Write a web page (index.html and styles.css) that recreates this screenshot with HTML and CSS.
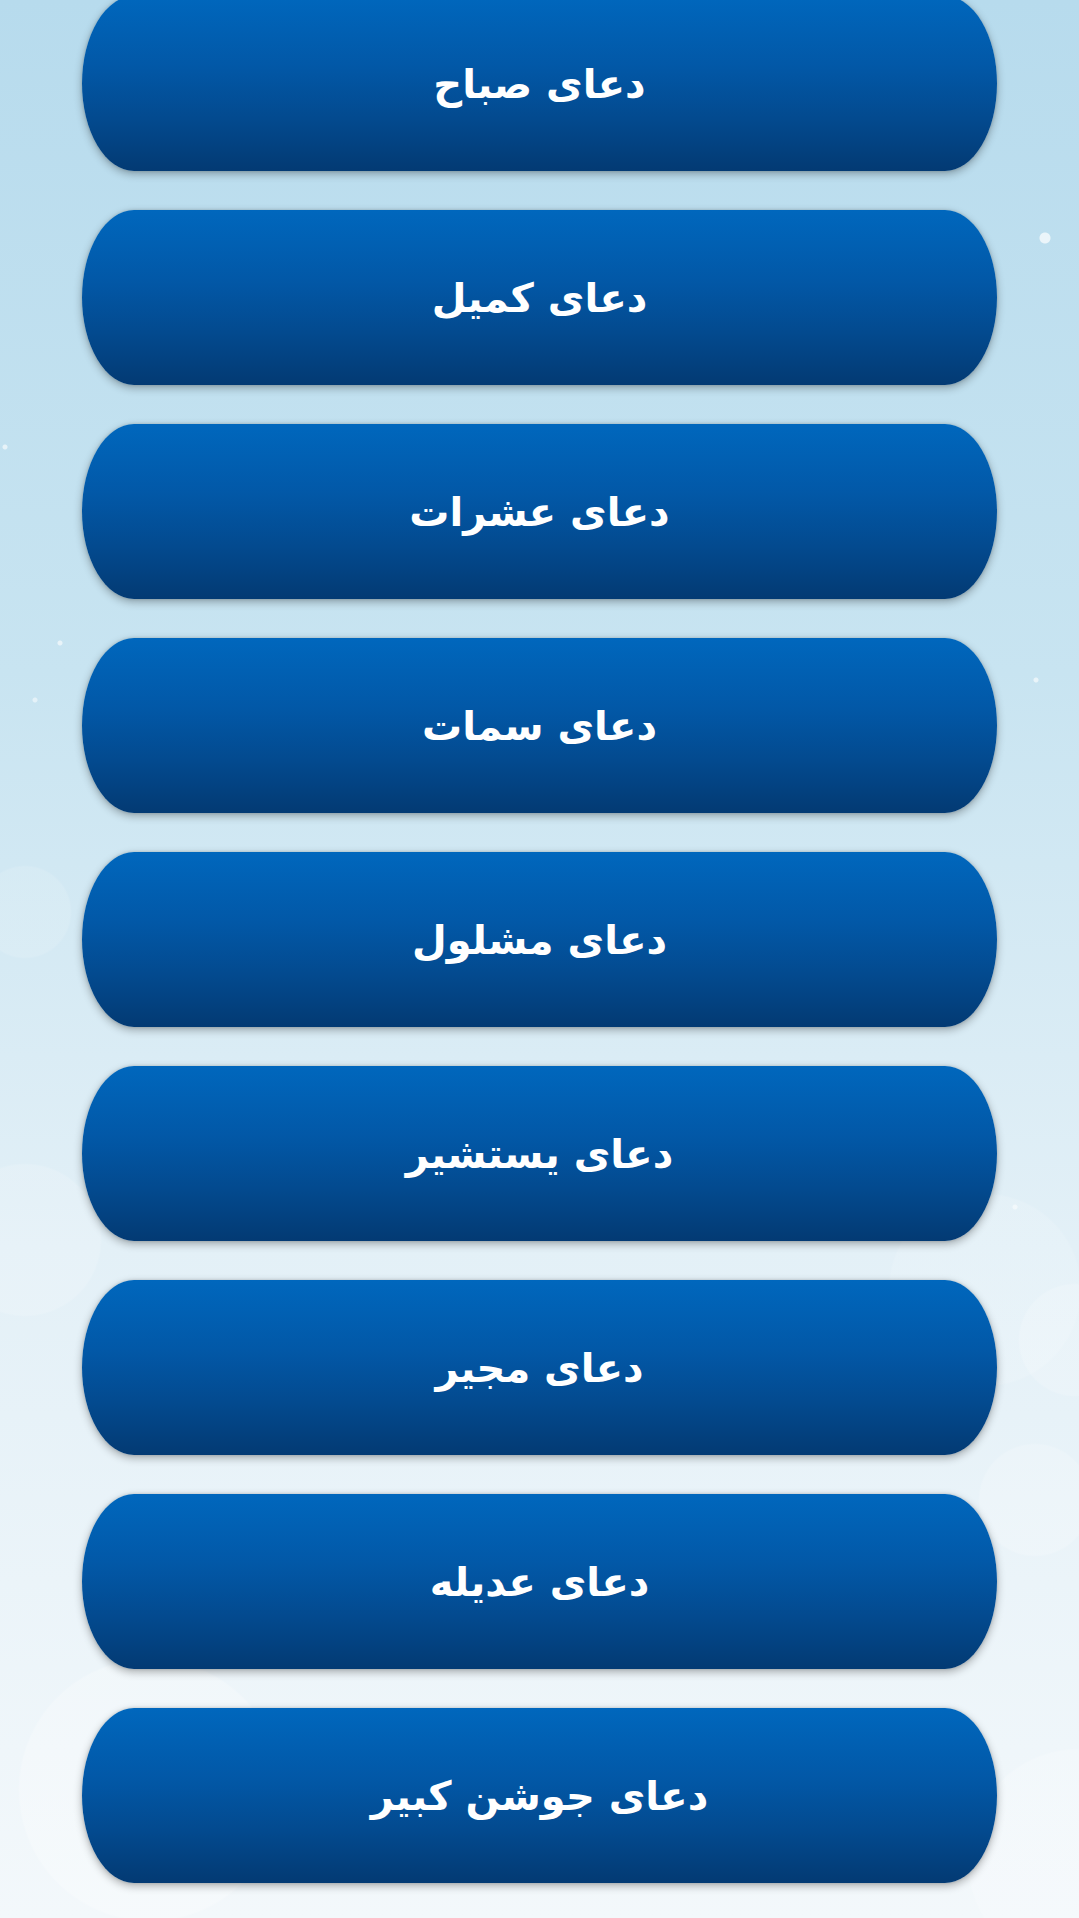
FILE: index.html
```html
<!DOCTYPE html>
<html lang="fa" dir="rtl">
<head>
    <meta charset="UTF-8">
    <meta name="viewport" content="width=device-width, initial-scale=1.0">
    <title>ادعیه</title>
    <link rel="stylesheet" href="styles.css">
</head>
<body>
    <!-- Prayer list -->
    <div class="dua-list">
        <button class="dua-button">دعای صباح</button>
        <button class="dua-button">دعای کمیل</button>
        <button class="dua-button">دعای عشرات</button>
        <button class="dua-button">دعای سمات</button>
        <button class="dua-button">دعای مشلول</button>
        <button class="dua-button">دعای یستشیر</button>
        <button class="dua-button">دعای مجیر</button>
        <button class="dua-button">دعای عدیله</button>
        <button class="dua-button">دعای جوشن کبیر</button>
    </div>
</body>
</html>
```

FILE: styles.css
```css
* {
    margin: 0;
    padding: 0;
    box-sizing: border-box;
}

html, body {
    height: 100%;
}

body {
    font-family: 'DejaVu Sans', 'Noto Sans', sans-serif;
    overflow: hidden;
    background:
        radial-gradient(circle at 1045px 238px, rgba(255, 255, 255, 0.7) 0 5px, transparent 6px),
        radial-gradient(circle at 1036px 680px, rgba(255, 255, 255, 0.6) 0 2px, transparent 3px),
        radial-gradient(circle at 5px 447px, rgba(255, 255, 255, 0.6) 0 2px, transparent 3px),
        radial-gradient(circle at 60px 643px, rgba(255, 255, 255, 0.6) 0 2px, transparent 3px),
        radial-gradient(circle at 35px 700px, rgba(255, 255, 255, 0.5) 0 2px, transparent 3px),
        radial-gradient(circle at 1015px 1207px, rgba(255, 255, 255, 0.5) 0 2px, transparent 3px),
        radial-gradient(circle at 25px 912px, rgba(255, 255, 255, 0.12) 0 45px, transparent 47px),
        radial-gradient(circle at 25px 1240px, rgba(255, 255, 255, 0.15) 0 75px, transparent 77px),
        radial-gradient(circle at 1035px 1500px, rgba(255, 255, 255, 0.18) 0 55px, transparent 57px),
        radial-gradient(circle at 1075px 1340px, rgba(255, 255, 255, 0.18) 0 55px, transparent 57px),
        radial-gradient(circle at 985px 1290px, rgba(255, 255, 255, 0.12) 0 95px, transparent 97px),
        radial-gradient(circle at 150px 1790px, rgba(255, 255, 255, 0.25) 0 130px, transparent 132px),
        radial-gradient(circle at 1079px 1860px, rgba(255, 255, 255, 0.2) 0 110px, transparent 112px),
        linear-gradient(180deg, #b7dbed 0%, #c8e4f1 35%, #e3f0f7 65%, #f3f8fb 100%);
}

/* Prayer list */
.dua-list {
    display: flex;
    flex-direction: column;
    gap: 39px;
    padding: 0 82px;
    margin-top: -4px;
}

.dua-button {
    height: 175px;
    width: 100%;
    border: none;
    border-radius: 52px / 50%;
    background: linear-gradient(180deg, #0067bd 0%, #0258a7 40%, #034a8f 70%, #033a73 100%);
    box-shadow: 0 3px 8px rgba(0, 0, 0, 0.3), 0 0 3px rgba(0, 0, 0, 0.15);
    color: #ffffff;
    font-family: inherit;
    font-size: 40px;
    font-weight: bold;
    display: flex;
    align-items: center;
    justify-content: center;
    cursor: pointer;
    flex-shrink: 0;
}
```
